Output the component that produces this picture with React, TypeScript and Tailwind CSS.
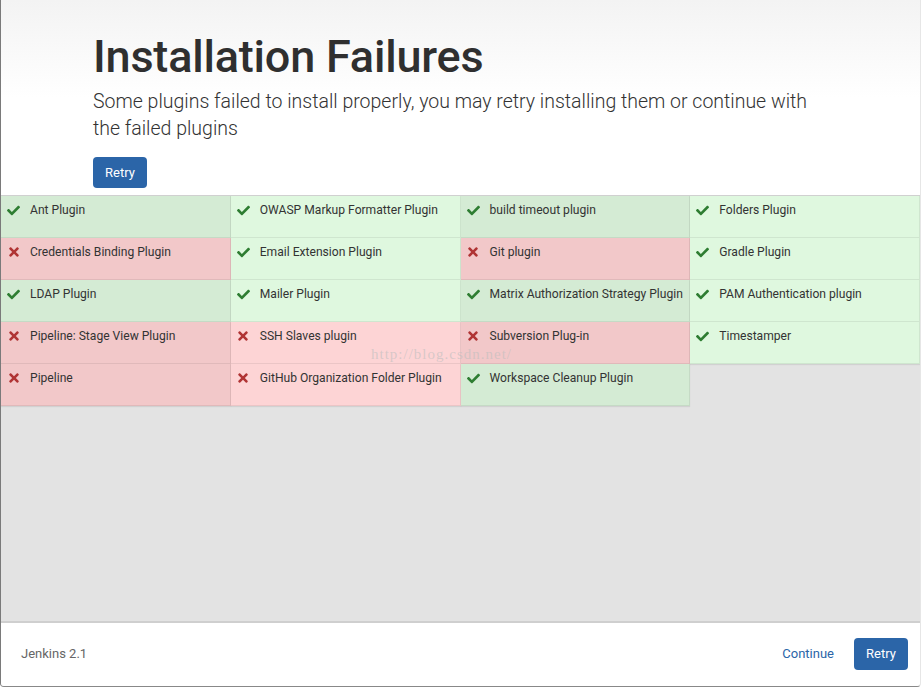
import { FaCheck, FaTimes } from "react-icons/fa";

type Plugin = { name: string; ok: boolean };

const plugins: Plugin[] = [
  { name: "Ant Plugin", ok: true },
  { name: "OWASP Markup Formatter Plugin", ok: true },
  { name: "build timeout plugin", ok: true },
  { name: "Folders Plugin", ok: true },
  { name: "Credentials Binding Plugin", ok: false },
  { name: "Email Extension Plugin", ok: true },
  { name: "Git plugin", ok: false },
  { name: "Gradle Plugin", ok: true },
  { name: "LDAP Plugin", ok: true },
  { name: "Mailer Plugin", ok: true },
  { name: "Matrix Authorization Strategy Plugin", ok: true },
  { name: "PAM Authentication plugin", ok: true },
  { name: "Pipeline: Stage View Plugin", ok: false },
  { name: "SSH Slaves plugin", ok: false },
  { name: "Subversion Plug-in", ok: false },
  { name: "Timestamper", ok: true },
  { name: "Pipeline", ok: false },
  { name: "GitHub Organization Folder Plugin", ok: false },
  { name: "Workspace Cleanup Plugin", ok: true },
];

function cellColor(ok: boolean, dark: boolean) {
  if (ok) return dark ? "bg-[#d4ebd4]" : "bg-[#dff8df]";
  return dark ? "bg-[#f2c8c9]" : "bg-[#fdd4d5]";
}

export default function App() {
  return (
    <div
      className="relative flex h-[687px] w-[921px] flex-col overflow-hidden rounded-b-[4px] border-b border-l border-r border-b-[#888] border-l-[#7a7a7a] border-r-[#e6e6e6] bg-[#e3e3e3] text-[#333]"
      style={{ fontFamily: "Roboto, 'Noto Sans', sans-serif" }}
    >
      <div className="bg-gradient-to-b from-[#f3f3f3] via-white to-white pl-[92px] pt-[29px] pb-[7px]">
        <h1 className="text-[45px] font-medium leading-[56px] tracking-[-0.2px] text-[#2f2f2f]">
          Installation Failures
        </h1>
        <p className="mt-[3px] w-[722px] text-[19.5px] font-light leading-[27px] text-[#333]">
          Some plugins failed to install properly, you may retry installing them or continue with the failed plugins
        </p>
        <button className="mt-[15px] h-[31px] w-[54px] rounded-[4px] bg-[#2b65a8] text-[13px] text-white">
          Retry
        </button>
      </div>

      <div className="grid grid-cols-4 border-t border-[#d0d0d0]">
        {plugins.map((p, i) => (
          <div
            key={p.name}
            className={`flex h-[42px] items-start gap-[10px] border-b border-r border-[rgba(0,0,0,0.07)] pl-[6px] pt-[6px] text-[12.1px] leading-[16px] shadow-[0_1px_1px_rgba(0,0,0,0.08)] ${cellColor(
              p.ok,
              i % 2 === 0
            )}`}
          >
            <span className="flex h-[16px] w-[13px] items-center justify-center">
              {p.ok ? (
                <FaCheck className="h-[13px] w-[13px] text-[#2e7d32]" />
              ) : (
                <FaTimes className="h-[14px] w-[12px] text-[#b03434]" />
              )}
            </span>
            <span className="whitespace-nowrap text-[#333]">{p.name}</span>
          </div>
        ))}
      </div>

      <span
        className="pointer-events-none absolute left-[370px] top-[343px] text-[15px] tracking-[1px] text-[rgba(190,190,190,0.6)]"
        style={{ fontFamily: "'Liberation Serif', serif" }}
      >
        http://blog.csdn.net/
      </span>

      <div className="flex-1" />

      <div className="flex h-[65px] items-center justify-between border-t-2 border-[#cfcfcf] bg-white pb-[2px] pl-[20px] pr-[12px]">
        <span className="text-[13px] text-[#666]">Jenkins 2.1</span>
        <div className="flex items-center gap-[20px]">
          <button className="text-[13px] text-[#2b65a8]">Continue</button>
          <button className="h-[32px] w-[54px] rounded-[4px] bg-[#2b65a8] text-[13px] text-white">Retry</button>
        </div>
      </div>
    </div>
  );
}
